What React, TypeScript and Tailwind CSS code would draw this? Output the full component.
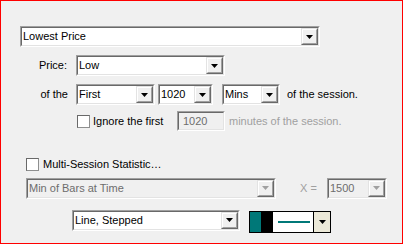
import React from "react";

const Arrow = ({ gray }: { gray?: boolean }) => (
  <svg width="7" height="4" viewBox="0 0 7 4">
    <path d="M0 0h7L3.5 4z" fill={gray ? "#a0a0a0" : "#000"} />
  </svg>
);

const DropButton = ({ gray }: { gray?: boolean }) => (
  <div className="flex h-full w-[17px] border border-t-[#e3e3e3] border-l-[#e3e3e3] border-r-[#696969] border-b-[#696969]">
    <div className="flex flex-1 items-center justify-center bg-[#f0f0f0] border border-t-white border-l-white border-r-[#a0a0a0] border-b-[#a0a0a0]">
      <Arrow gray={gray} />
    </div>
  </div>
);

const Combo = ({
  text,
  width,
  disabled,
}: {
  text: string;
  width: string;
  disabled?: boolean;
}) => (
  <div className={`flex h-[21px] shrink-0 border border-t-[#a0a0a0] border-l-[#a0a0a0] border-r-white border-b-white ${width}`}>
    <div
      className={`flex flex-1 items-center border border-t-[#696969] border-l-[#696969] border-r-[#e3e3e3] border-b-[#e3e3e3] ${
        disabled ? "bg-[#f0f0f0] text-[#6d6d6d]" : "bg-white text-black"
      }`}
    >
      <span className="flex-1 pl-[1px] leading-none">{text}</span>
      <DropButton gray={disabled} />
    </div>
  </div>
);

const Check = ({ className }: { className?: string }) => (
  <div className={`h-[13px] w-[13px] shrink-0 border border-[#8e8f8f] border-t-[#696969] border-l-[#696969] bg-white ${className ?? ""}`} />
);

export default function App() {
  return (
    <div
      className="flex h-[244px] w-[403px] flex-col border border-[#ff0000] bg-[#f0f0f0] pt-[25px] text-[11px] text-black"
      style={{ fontFamily: '"Liberation Sans", Arial, sans-serif' }}
    >
      {/* main statistic */}
      <div className="ml-[19px] flex">
        <Combo text="Lowest Price" width="w-[300px]" />
      </div>

      {/* price */}
      <div className="mt-[8px] flex items-center">
        <div className="w-[75px] pr-[9px] text-right">Price:</div>
        <Combo text="Low" width="w-[149px]" />
      </div>

      {/* of the ... of the session */}
      <div className="mt-[8px] flex items-center">
        <div className="w-[75px] pr-[8px] text-right">of the</div>
        <Combo text="First" width="w-[79px]" />
        <div className="ml-[3px]">
          <Combo text="1020" width="w-[55px]" />
        </div>
        <div className="ml-[9px]">
          <Combo text="Mins" width="w-[58px]" />
        </div>
        <span className="ml-[7px]">of the session.</span>
      </div>

      {/* ignore */}
      <div className="mt-[6px] flex h-[20px] items-center">
        <Check className="ml-[76px]" />
        <span className="ml-[3px] w-[84px]">Ignore the first</span>
        <div className="flex h-[20px] w-[48px] items-center border border-t-[#a0a0a0] border-l-[#a0a0a0] border-r-white border-b-white">
          <div className="flex h-full flex-1 items-center border border-t-[#696969] border-l-[#696969] border-r-[#e3e3e3] border-b-[#e3e3e3] pl-[4px] text-[#6d6d6d]">
            1020
          </div>
        </div>
        <span className="ml-[4px] text-[#a0a0a0]">minutes of the session.</span>
      </div>

      {/* multi session */}
      <div className="mt-[25px] flex items-center">
        <Check className="ml-[25px]" />
        <span className="ml-[4px]">Multi-Session Statistic…</span>
      </div>

      <div className="mt-[5px] flex items-center">
        <div className="ml-[25px]">
          <Combo text="Min of Bars at Time" width="w-[250px]" disabled />
        </div>
        <span className="ml-[24px] w-[27px] text-[#a0a0a0]">X =</span>
        <Combo text="1500" width="w-[60px]" disabled />
      </div>

      {/* plot style */}
      <div className="mt-[11px] flex items-start">
        <div className="ml-[71px]">
          <Combo text="Line, Stepped" width="w-[168px]" />
        </div>
        <div className="ml-[9px] mt-[1px] flex h-[22px] w-[82px] border border-black">
          <div className="w-[11px] bg-[#007878]" />
          <div className="w-[12px] bg-black" />
          <div className="flex w-[40px] items-center bg-white pl-[5px]">
            <div className="h-[2px] w-[32px] bg-[#007878]" />
          </div>
          <div className="flex flex-1 items-center justify-center border-l border-black bg-[#ece9d8]">
            <Arrow />
          </div>
        </div>
      </div>
    </div>
  );
}
